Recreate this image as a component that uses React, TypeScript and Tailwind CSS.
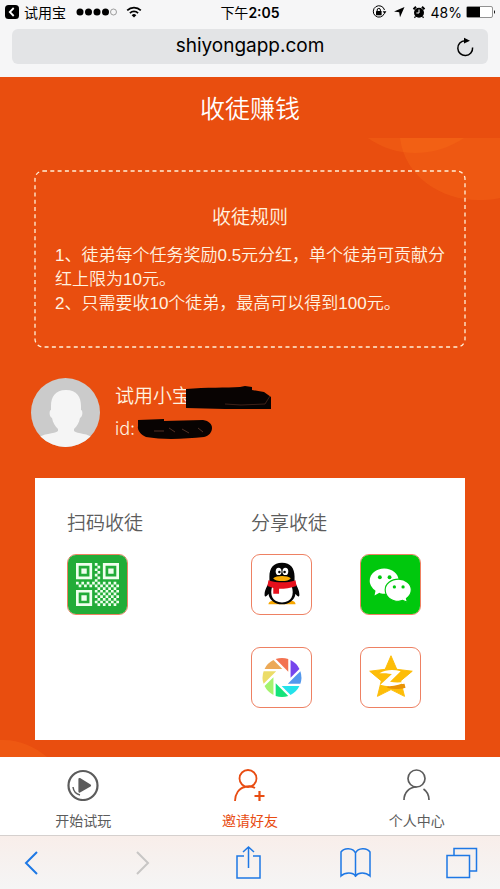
import type { ReactNode } from "react"

const rules = [
  "1、徒弟每个任务奖励0.5元分红，单个徒弟可贡献分红上限为10元。",
  "2、只需要收10个徒弟，最高可以得到100元。",
]

function StatusBar() {
  return (
    <div className="grid h-6 grid-cols-3 items-center px-1 font-['Inter','Noto_Sans_CJK_SC',sans-serif] text-[14px] text-black">
      <div className="flex items-center">
        <svg className="size-4" viewBox="0 0 16 16">
          <rect x="1" y="1" width="14" height="14" rx="3.5" />
          <path d="M9.7 4 5.8 8l3.9 4" fill="none" stroke="#fff" strokeWidth="1.8" />
        </svg>
        <span className="ml-1">试用宝</span>
        <svg className="ml-2 h-4 w-[43px]" viewBox="0 0 43 16">
          <circle cx="6" cy="8" r="3.5" />
          <circle cx="14.5" cy="8" r="3.5" />
          <circle cx="23" cy="8" r="3.5" />
          <circle cx="31.5" cy="8" r="3.5" />
          <circle cx="39.5" cy="8" r="3" fill="none" stroke="#777" strokeWidth=".7" />
        </svg>
        <svg className="ml-2 h-4 w-[18px]" viewBox="0 0 18 16" fill="none" stroke="#000" strokeWidth="1.7">
          <path d="M2.2 6.4a9.6 9.6 0 0 1 13.6 0M4.9 9.1a5.8 5.8 0 0 1 8.2 0" />
          <path d="M6.7 11.2a3.3 3.3 0 0 1 4.6 0L9 13.6z" fill="#000" stroke="none" />
        </svg>
      </div>
      <div className="text-center">
        下午<span className="font-semibold">2:05</span>
      </div>
      <div className="flex items-center justify-end">
        <svg className="size-4" viewBox="0 0 16 16">
          <path d="M13.3 9.5A5.7 5.7 0 1 1 13.5 6" fill="none" stroke="#000" />
          <path d="m11.6 7.3 3.8-.1-1.7 2.8z" />
          <rect x="5" y="7" width="5.6" height="4.2" rx=".5" />
          <path d="M6.2 7V6a1.6 1.6 0 0 1 3.2 0v1" fill="none" stroke="#000" />
        </svg>
        <svg className="ml-1 size-4" viewBox="0 0 16 16">
          <path d="M13.5 3 9 13.3 8.2 8.3 3 7.6z" />
        </svg>
        <svg className="ml-1 size-4" viewBox="0 0 16 16">
          <circle cx="8" cy="8.7" r="5" />
          <path d="M2.5 5.3 5 2.8M13.5 5.3 11 2.8" stroke="#000" strokeWidth="2" />
          <path d="m4.5 12.3-1 1.5M11.5 12.3l1 1.5" stroke="#000" strokeWidth="1.2" />
          <path d="M8 5.5V9H5.4" fill="none" stroke="#fff" />
        </svg>
        <span className="ml-1">48%</span>
        <svg className="ml-1 h-3 w-[30px]" viewBox="0 0 30 12">
          <rect x=".5" y=".5" width="26" height="11" rx="1.5" fill="#fff" stroke="#777" strokeWidth=".8" />
          <path d="M1 1h13v10H1z" />
          <path d="M28 4q2 2 0 4z" />
        </svg>
      </div>
    </div>
  )
}

function AddressBar() {
  return (
    <div className="mx-3 mt-[5px] flex h-[35px] items-center rounded-md bg-[#e3e4e6] text-black">
      <span className="w-8" />
      <span className="flex-1 text-center font-['Inter',sans-serif] text-[19px]">shiyongapp.com</span>
      <button className="w-8" aria-label="刷新">
        <svg className="-ml-px size-5" viewBox="0 0 20 20">
          <path d="M17.6 10.5A7.4 7.4 0 1 1 10 3.7" fill="none" stroke="#000" strokeWidth="1.5" />
          <path d="m9 .8 6 3-6 2.7z" />
        </svg>
      </button>
    </div>
  )
}

function Avatar() {
  return (
    <svg className="size-[69px] shrink-0 rounded-full" viewBox="0 0 69 69">
      <rect width="69" height="69" fill="#cbcbcb" />
      <path
        d="M35 12c11 0 15 7 15 16v4c2 0 2 7-1 8-1 5-3 8-6 11v2c3 3 15 2 20 8v8H6v-8c5-6 18-5 21-8v-2c-3-3-5-6-6-11-3-1-3-8-1-8v-4c0-9 4-16 15-16Z"
        fill="#f5f5f5"
      />
    </svg>
  )
}

function QrIcon() {
  const cells: string[] = []
  for (let r = 0; r < 16; r++) {
    for (let c = 0; c < 16; c++) {
      const timing = (c === 7 || c === 8) && r < 7
      const data = r > 6 && (r < 9 || c > 6)
      if ((timing || data) && (r + c) % 2 === 1) cells.push(`M${c} ${r}h1v1h-1z`)
    }
  }
  return (
    <svg className="size-full bg-[#22ac38] p-2" viewBox="0 0 16 16" fill="#f0ffee">
      {["0 0", "10 0", "0 10"].map((pos) => (
        <g key={pos} transform={`translate(${pos})`}>
          <path d="M0 0h6v6H0zM1 1v4h4V1z" fillRule="evenodd" />
          <path d="M2 2h2v2H2z" />
        </g>
      ))}
      <path d={cells.join("")} />
    </svg>
  )
}

function QqIcon() {
  return (
    <svg className="size-full" viewBox="0 0 61 61">
      <path d="M17 51c0-3 4-4 7-4h14c4 0 7 1 7 4H17Z" fill="#f7a600" />
      <path d="M31 8c9 0 13 6 13 14v5c2 5 5 9 5 14 0 3-2 2-4-1-1 7-7 11-14 11s-13-4-14-11c-2 3-4 4-4 1 0-5 3-9 5-14v-5C18 14 22 8 31 8Z" fill="#050505" />
      <path d="M21 32h20c3 9 0 17-10 17s-13-8-10-17Z" fill="#fff" />
      <path d="M17 26c9 3 19 3 28 0l1 6c-6 2-12 3-18 3v5h-6v-6l-6-2z" fill="#e6101c" />
      <path d="M22 24c3-3 15-3 18 0-2 4-16 4-18 0Z" fill="#f9ae08" />
      <ellipse cx="27.5" cy="17" rx="3" ry="3.8" fill="#fff" />
      <ellipse cx="34.5" cy="17" rx="3" ry="3.8" fill="#fff" />
      <circle cx="28.3" cy="17.5" r="1.3" />
      <circle cx="33.7" cy="17.5" r="1.3" />
    </svg>
  )
}

function WechatIcon() {
  return (
    <svg className="size-full bg-[#00c80d]" viewBox="0 0 61 61">
      <path d="M24 14c8 0 15 5 15 13S32 40 24 40c-2 0-4 0-5-1l-5 3 1-5c-3-2-6-6-6-10 0-8 7-13 15-13Z" fill="#fff" />
      <path d="M39 25c7 0 13 5 13 11 0 4-2 7-5 9l1 4-5-2-4 1c-8 0-14-5-14-12 0-6 6-11 14-11Z" fill="#fff" stroke="#00c80d" strokeWidth="1.2" />
      <circle cx="19.5" cy="23" r="2" fill="#00c80d" />
      <circle cx="29.5" cy="23" r="2" fill="#00c80d" />
      <circle cx="34.5" cy="33" r="1.7" fill="#00c80d" />
      <circle cx="43.5" cy="33" r="1.7" fill="#00c80d" />
    </svg>
  )
}

// each blade is the same wedge turned 45 degrees round the lens
const blades = ["#f37351", "#7645ec", "#5398ed", "#23e2ea", "#14e37a", "#a4f36e", "#ecdc68", "#eca957"]

function MomentsIcon() {
  return (
    <svg className="size-full" viewBox="0 0 61 61">
      {blades.map((fill, i) => (
        <path key={fill} d="M24.5 11.5A20 20 0 0 1 37.5 11.500V24.5Z" fill={fill} transform={`rotate(${i * 45} 31 30.5)`} />
      ))}
    </svg>
  )
}

function QzoneIcon() {
  return (
    <svg className="size-full" viewBox="0 0 61 61">
      <path d="m31 8 6 14 16 2-12 10 4 16-14-7-14 7 4-16L9 24l16-2z" fill="#fdbd08" stroke="#fdbd08" strokeLinejoin="round" />
      <path d="m28 39 17-2 1 4c-7 2-13 2-19 0Z" fill="#e99307" />
      <path d="M19 26c7-4 15-4 22-2l-11 11c5 1 10 1 16 0-6 4-17 6-26 3l12-11c-4-1-8-1-13-1Z" fill="#fff" />
    </svg>
  )
}

function ShareButton({ label, children }: { label: string; children: ReactNode }) {
  return (
    <button className="block size-[61px] overflow-hidden rounded-[9px] border border-[#ee8163]" aria-label={label}>
      {children}
    </button>
  )
}

function TabBar() {
  return (
    <nav className="grid h-[78px] grid-cols-3 bg-white text-center text-[14px] leading-5 text-[#5c5c5c]">
      <a href="#play" className="flex flex-col items-center pt-3">
        <svg className="size-8" viewBox="0 0 32 32" fill="none" stroke="#5c5c5c" strokeWidth="2.2">
          <circle cx="16" cy="16.5" r="14.5" />
          <path d="m12.5 10 10.500 6.500-10.500 6z" fill="#5c5c5c" strokeLinejoin="round" />
          <path d="M6 18c.5 4 3 7 7 8" strokeWidth="1.5" />
        </svg>
        <span className="mt-[10px]">开始试玩</span>
      </a>
      <a href="#invite" className="flex flex-col items-center pt-3 text-[#e84c12]">
        <svg className="size-8" viewBox="0 0 32 32" fill="none" stroke="#e84c12" strokeWidth="1.8">
          <circle cx="14" cy="9.5" r="8.5" />
          <path d="M1 32c0-7 4-13 10-14 3-1 7-1 10 1" />
          <path d="M25.5 22v10M20.500 27h10" strokeWidth="2.2" />
        </svg>
        <span className="mt-[10px]">邀请好友</span>
      </a>
      <a href="#me" className="flex flex-col items-center pt-3">
        <svg className="size-8" viewBox="0 0 32 32" fill="none" stroke="#5c5c5c" strokeWidth="1.7">
          <circle cx="15.500" cy="9.5" r="8.5" />
          <path d="M3 31c0-7 5-13 12.5-13M22.500 20c3 2 5.500 6 5.500 11" />
        </svg>
        <span className="mt-[10px]">个人中心</span>
      </a>
    </nav>
  )
}

function BrowserToolbar() {
  return (
    <div className="flex h-[54px] items-center justify-between border-t border-[#d5d0ce] bg-gradient-to-b from-[#f8eeea] to-[#f5f5f5] pr-[22px] pl-4 text-[#1e78e5]">
      <button aria-label="后退">
        <svg className="size-8" viewBox="0 0 32 32" fill="none" stroke="currentColor" strokeWidth="2">
          <path d="M21 5 10 16l11 11" />
        </svg>
      </button>
      <button className="text-[#c8c6c5]" aria-label="前进">
        <svg className="size-8" viewBox="0 0 32 32" fill="none" stroke="currentColor" strokeWidth="2">
          <path d="m13 5 11 11-11 11" />
        </svg>
      </button>
      <button aria-label="分享">
        <svg className="h-9 w-8" viewBox="0 0 32 36" fill="none" stroke="currentColor" strokeWidth="1.5">
          <path d="M13 11H6v22h23V11h-7M17.5 23V2M12 7l5.500-5L23 7" />
        </svg>
      </button>
      <button aria-label="书签">
        <svg className="size-8" viewBox="0 0 32 32" fill="none" stroke="currentColor" strokeWidth="1.5">
          <path d="M16.500 6C14 .5 5 .5 2 5v24c4-4 12-4 14.500 0 3-4 10-4 14.500 0V5c-3-4.500-12-4.500-14.500 1v24" />
        </svg>
      </button>
      <button aria-label="标签页">
        <svg className="size-8" viewBox="0 0 32 32" fill="none" stroke="currentColor" strokeWidth="1.5">
          <path d="M1 8.500h22.500V30.500H1zM8 8V1.500h22.500V24H24" />
        </svg>
      </button>
    </div>
  )
}

export default function App() {
  return (
    <div className="font-['Liberation_Sans','Noto_Sans_CJK_SC',sans-serif]">
      <header className="bg-[#f6f6f7] pb-[13px]">
        <StatusBar />
        <AddressBar />
      </header>

      <main className="relative overflow-hidden bg-[#e94e0f] pb-[17px] text-[#fff3e0]">
        <h1 className="flex h-[61px] items-center justify-center pt-1 text-[25px] font-[350] text-white">收徒赚钱</h1>

        <svg className="absolute top-[61px] right-0 h-16 w-[140px]" viewBox="0 0 140 64" fill="#ff7a1c" fillOpacity=".24">
          <path d="M8 0c28 20 66 20 96 0Z" />
          <path d="M40 0c5 40 44 64 83 62 6 0 12-1 17-2V0Z" />
        </svg>
        <svg className="absolute bottom-0 left-0 h-[18px] w-12" viewBox="0 0 48 18" fill="#ff7a1c" fillOpacity=".24">
          <path d="M0 1c18-1 34 6 47 17H0Z" />
        </svg>

        <section className="relative mx-[35px] mt-[33px] h-44 px-5 pt-[33px]">
          <svg className="absolute inset-0 size-full overflow-visible" fill="none" stroke="#fff0d8" strokeWidth="1.3" strokeDasharray="4 3.3">
            <rect width="100%" height="100%" rx="8" />
          </svg>
          <h2 className="text-center text-[19px] leading-7 font-[350]">收徒规则</h2>
          <div className="-mr-2 mt-3 text-[17px] leading-6 font-[350]">
            {rules.map((rule) => (
              <p key={rule}>{rule}</p>
            ))}
          </div>
        </section>

        <section className="mt-[31px] ml-[31px] flex items-center gap-[15px]">
          <Avatar />
          <div className="relative leading-8 font-[350]">
            <p className="text-[19px]">试用小宝</p>
            <p className="font-['Inter',sans-serif] text-[18px]">id:</p>
            <svg className="absolute top-0 left-5 h-16 w-[140px]" viewBox="0 0 140 64" fill="#080302">
              <path d="M51 8c20-2 41-1 54-2l5-1 7 1v3l12 2 7 5v12H90l-39-1z" />
              <path d="M3 39 29 38v2l39-1c6 1 9 4 9 8s-3 8-8 9c-19 2-41 3-58 0-5-2-9-7-8-11z" />
              <path d="m90 23 16 1 24-1 5-8" fill="none" stroke="#4b2a20" strokeWidth=".8" />
              <path d="M19 50h10m5-3 6 4m7-3 7 4m9-5 5 4" fill="none" stroke="#513126" />
            </svg>
          </div>
        </section>

        <section className="mx-[35px] mt-[31px] flex bg-white pt-8 pb-8 text-[#5c5c5c]">
          <div className="w-1/2 pl-8">
            <h2 className="text-[19px] leading-7 font-[350]">扫码收徒</h2>
            <div className="mt-4">
              <ShareButton label="二维码">
                <QrIcon />
              </ShareButton>
            </div>
          </div>
          <div className="w-1/2 pl-px">
            <h2 className="text-[19px] leading-7 font-[350]">分享收徒</h2>
            <div className="mt-4 flex flex-wrap gap-x-12 gap-y-8">
              <ShareButton label="QQ">
                <QqIcon />
              </ShareButton>
              <ShareButton label="微信">
                <WechatIcon />
              </ShareButton>
              <ShareButton label="朋友圈">
                <MomentsIcon />
              </ShareButton>
              <ShareButton label="QQ空间">
                <QzoneIcon />
              </ShareButton>
            </div>
          </div>
        </section>
      </main>

      <TabBar />
      <BrowserToolbar />
    </div>
  )
}
